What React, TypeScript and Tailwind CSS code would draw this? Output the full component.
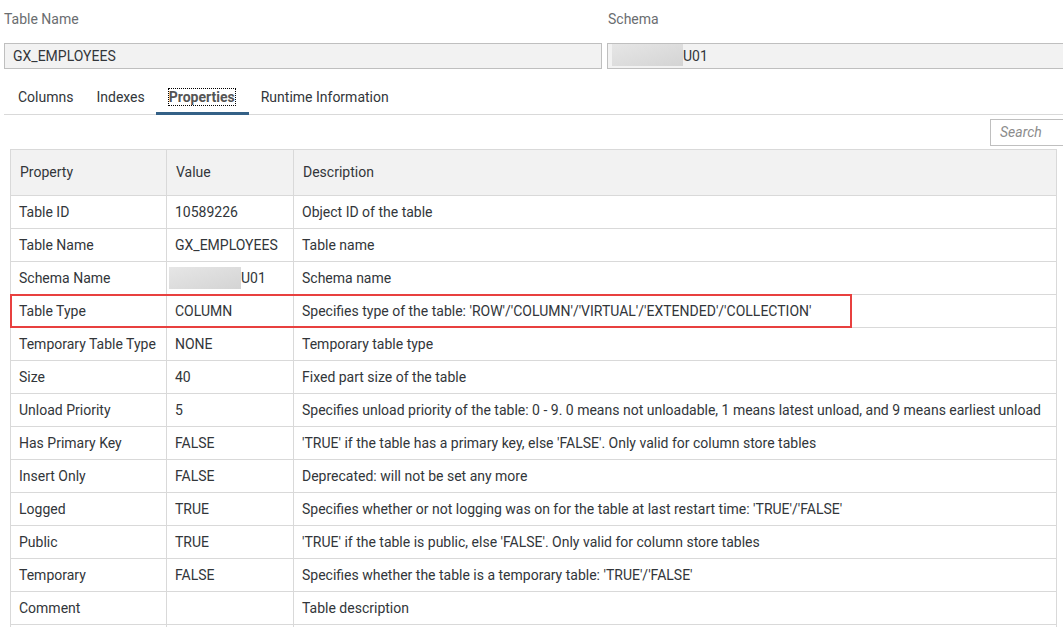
import React from "react";

const rows: { prop: string; value: string; desc: string; blur?: boolean }[] = [
  { prop: "Table ID", value: "10589226", desc: "Object ID of the table" },
  { prop: "Table Name", value: "GX_EMPLOYEES", desc: "Table name" },
  { prop: "Schema Name", value: "U01", desc: "Schema name", blur: true },
  {
    prop: "Table Type",
    value: "COLUMN",
    desc: "Specifies type of the table: 'ROW'/'COLUMN'/'VIRTUAL'/'EXTENDED'/'COLLECTION'",
  },
  { prop: "Temporary Table Type", value: "NONE", desc: "Temporary table type" },
  { prop: "Size", value: "40", desc: "Fixed part size of the table" },
  {
    prop: "Unload Priority",
    value: "5",
    desc: "Specifies unload priority of the table: 0 - 9. 0 means not unloadable, 1 means latest unload, and 9 means earliest unload",
  },
  {
    prop: "Has Primary Key",
    value: "FALSE",
    desc: "'TRUE' if the table has a primary key, else 'FALSE'. Only valid for column store tables",
  },
  { prop: "Insert Only", value: "FALSE", desc: "Deprecated: will not be set any more" },
  {
    prop: "Logged",
    value: "TRUE",
    desc: "Specifies whether or not logging was on for the table at last restart time: 'TRUE'/'FALSE'",
  },
  {
    prop: "Public",
    value: "TRUE",
    desc: "'TRUE' if the table is public, else 'FALSE'. Only valid for column store tables",
  },
  {
    prop: "Temporary",
    value: "FALSE",
    desc: "Specifies whether the table is a temporary table: 'TRUE'/'FALSE'",
  },
  { prop: "Comment", value: "", desc: "Table description" },
  { prop: "", value: "", desc: "" },
];

function Blur({ w }: { w: number }) {
  return (
    <span
      className="inline-block h-[22px] bg-gradient-to-br from-[#e6e6e6] to-[#d4d4d4]"
      style={{ width: w }}
    />
  );
}

export default function App() {
  return (
    <div
      className="h-[627px] w-[1063px] overflow-hidden bg-white text-[14px] text-[#32363a]"
      style={{ fontFamily: "Roboto, 'Liberation Sans', sans-serif" }}
    >
      <div className="w-[1100px] pl-[4px]">
        {/* header fields */}
        <div className="flex gap-[5px] pt-[10px]">
          <div className="w-[598px]">
            <div className="h-[18px] leading-[18px] text-[#6a6d70]">Table Name</div>
            <div className="mt-[15px] flex h-[26px] items-center border border-[#bfbfbf] bg-[#f2f2f2] pl-[8px]">
              GX_EMPLOYEES
            </div>
          </div>
          <div className="flex-1">
            <div className="h-[18px] pl-[1px] leading-[18px] text-[#6a6d70]">Schema</div>
            <div className="mt-[15px] flex h-[26px] items-center border border-[#bfbfbf] bg-[#f2f2f2] pl-[4px]">
              <span className="-mt-[3px] flex items-center">
                <Blur w={71} />
              </span>
              <span>U01</span>
            </div>
          </div>
        </div>

        {/* tabs */}
        <div className="mt-[13px] flex h-[33px] items-stretch border-b border-[#d9d9d9] pb-[2px] pl-[2px]">
          <div className="flex items-center px-[12px] text-[#32363a]">Columns</div>
          <div className="flex items-center pl-[11px] pr-[12px] text-[#32363a]">Indexes</div>
          <div className="relative flex items-center pl-[12px] pr-[14px]">
            <span className="font-bold leading-[16px] text-[#555] outline outline-1 outline-dotted outline-black">
              Properties
            </span>
            <span className="absolute bottom-[-3px] left-[-1px] right-0 h-[3px] bg-[#346187]" />
          </div>
          <div className="flex items-center px-[12px] text-[#32363a]">Runtime Information</div>
        </div>

        {/* search */}
        <div className="pt-[4px]">
          <div className="ml-[986px] flex h-[27px] w-[90px] items-center border border-[#bfbfbf] pl-[9px] italic text-[#8c8c8c]">
            Search
          </div>
        </div>

        {/* table */}
        <div className="relative ml-[6px] mt-[3px] w-[1047px]">
          <div className="flex h-[47px] border border-[#d9d9d9] bg-[#f2f2f2]">
            <div className="flex w-[156px] items-center border-r border-[#d9d9d9] pl-[9px]">Property</div>
            <div className="flex w-[127px] items-center border-r border-[#d9d9d9] pl-[9px]">Value</div>
            <div className="flex flex-1 items-center pl-[9px]">Description</div>
          </div>
          {rows.map((r, i) => (
            <div key={i} className="flex h-[33px] border-x border-b border-[#d9d9d9]">
              <div className="flex w-[156px] items-center border-r border-[#d9d9d9] pl-[8px]">{r.prop}</div>
              <div className="flex w-[127px] items-center border-r border-[#d9d9d9] pl-[8px]">
                {r.blur && (
                  <span className="-ml-[6px] flex items-center">
                    <Blur w={72} />
                  </span>
                )}
                {r.value}
              </div>
              <div className="flex flex-1 items-center whitespace-nowrap pl-[8px]">{r.desc}</div>
            </div>
          ))}
          {/* highlight annotation */}
          <div className="pointer-events-none absolute left-0 top-[145px] h-[34px] w-[842px] border-2 border-[#e8403f]" />
        </div>
      </div>
    </div>
  );
}
